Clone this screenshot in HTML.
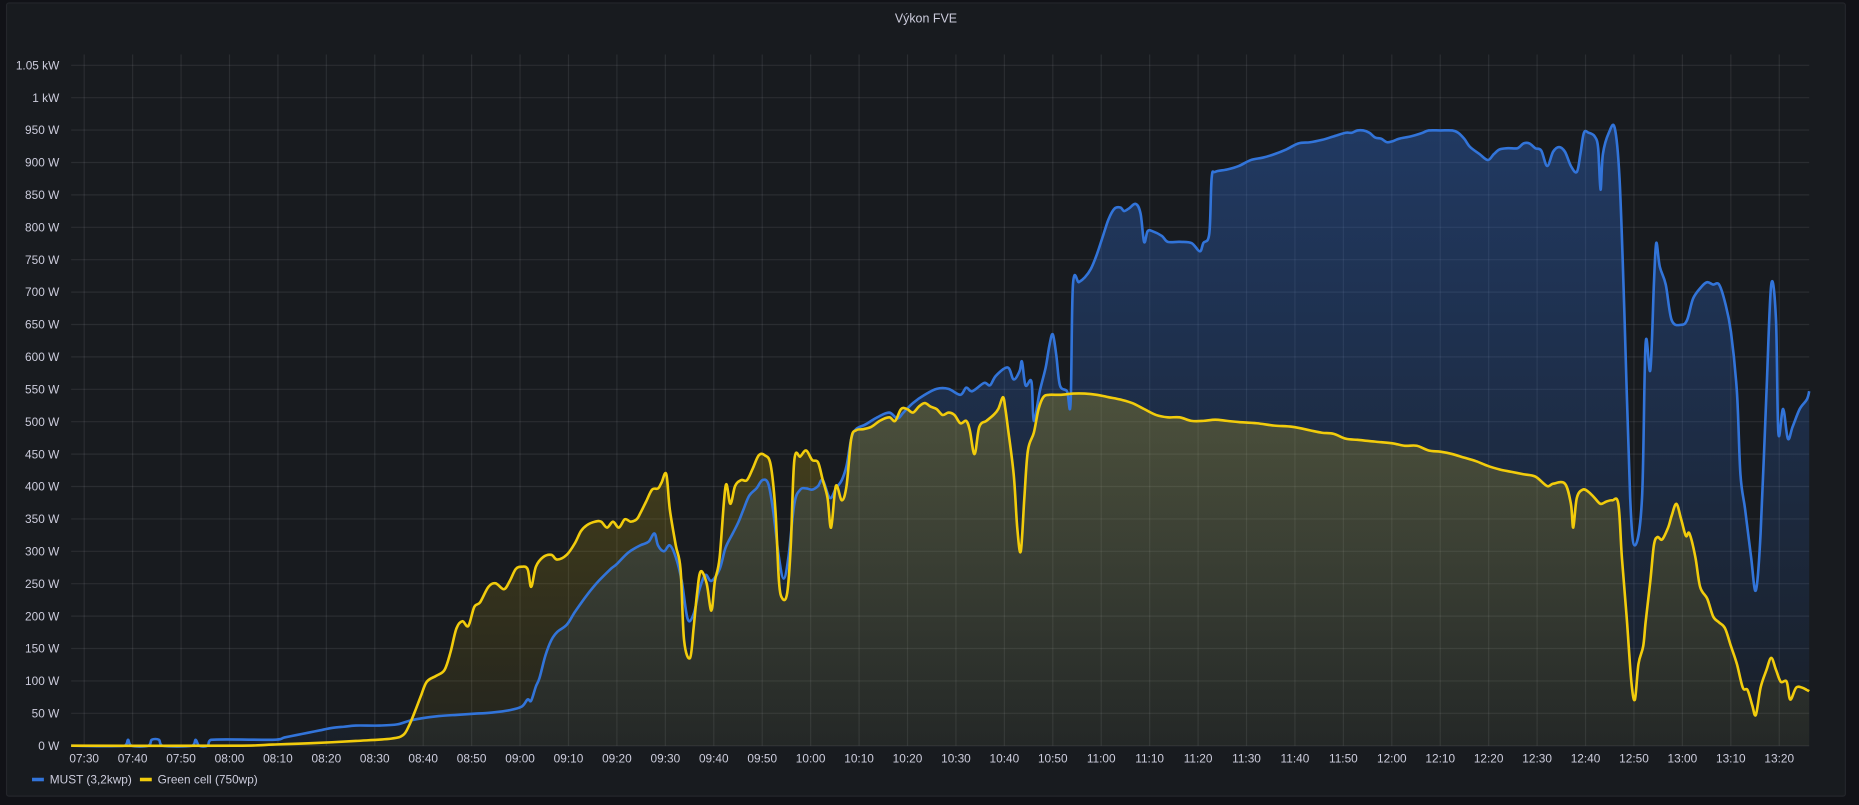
<!DOCTYPE html>
<html><head><meta charset="utf-8"><style>
html,body{margin:0;padding:0;background:#111217;width:1859px;height:805px;overflow:hidden}
svg{display:block}
text{font-family:"Liberation Sans",sans-serif;fill:#ccccdc}
</style></head><body>
<svg width="1859" height="805" viewBox="0 0 1568 679" xmlns="http://www.w3.org/2000/svg">
<defs>
<linearGradient id="gb" x1="0" y1="0" x2="0" y2="1"><stop offset="0" stop-color="#2f6bd0" stop-opacity="0.38"/><stop offset="1" stop-color="#2f6bd0" stop-opacity="0.05"/></linearGradient>
<linearGradient id="gy" x1="0" y1="0" x2="0" y2="1"><stop offset="0" stop-color="#f2cc0c" stop-opacity="0.22"/><stop offset="1" stop-color="#f2cc0c" stop-opacity="0.05"/></linearGradient>
</defs>
<rect x="5.5" y="2.5" width="1551" height="669" rx="2" fill="#181b1f" stroke="#24262b"/>
<text x="781" y="19" font-size="10.5" text-anchor="middle" fill="#d8d9da">Výkon FVE</text>
<g id="grid" stroke="#ccccdc" stroke-opacity="0.1" stroke-width="1"></g>
<g id="yl" font-size="10" text-anchor="end"></g>
<g id="xl" font-size="10" text-anchor="middle"></g>
<path id="bf" fill="url(#gb)"/>
<path id="yf" fill="url(#gy)"/>
<path id="bl" fill="none" stroke="#3274d9" stroke-width="2.2" stroke-linejoin="round"/>
<path id="yln" fill="none" stroke="#f2cc0c" stroke-width="2.2" stroke-linejoin="round"/>
<rect x="27" y="656" width="10" height="3" fill="#3274d9"/>
<text x="42" y="661" font-size="10">MUST (3,2kwp)</text>
<rect x="118" y="656" width="10" height="3" fill="#f2cc0c"/>
<text x="133" y="661" font-size="10">Green cell (750wp)</text>
</svg>
<script>
var NS="http://www.w3.org/2000/svg";
function el(p,t,a,tx){var e=document.createElementNS(NS,t);for(var k in a)e.setAttribute(k,a[k]);if(tx)e.textContent=tx;document.getElementById(p).appendChild(e);}
var yl=["0 W","50 W","100 W","150 W","200 W","250 W","300 W","350 W","400 W","450 W","500 W","550 W","600 W","650 W","700 W","750 W","800 W","850 W","900 W","950 W","1 kW","1.05 kW"];
for(var k=0;k<22;k++){var y=629-k*27.33;el("grid","line",{x1:60,x2:1526,y1:y,y2:y});el("yl","text",{x:50,y:y+3.5},yl[k]);}
for(var i=0;i<36;i++){var x=71+40.85*i;el("grid","line",{x1:x,x2:x,y1:46,y2:629});var m=450+i*10;var h=Math.floor(m/60),mm=m%60;el("xl","text",{x:x,y:643},(h<10?"0":"")+h+":"+(mm<10?"0":"")+mm);}
var B=[[60,629],[105,629],[108,624],[111,629],[125,629],[128,624],[134,624],[137,629],[162,629],[165,624],[168,629],[175,629],[178,624],[230,624],[240,622],[250,620],[260,618],[270,616],[280,614],[290,613],[300,612],[320,612],[335,611],[345,608],[355,606],[370,604],[385,603],[400,602],[415,601],[430,599],[440,596],[445,590],[448,591],[452,579],[455,572],[460,553],[465,540],[470,533],[478,527],[485,516],[495,502],[505,490],[515,480],[520,476],[530,466],[540,460],[547,457],[552,450],[555,460],[560,465],[565,460],[570,470],[575,490],[580,522],[585,518],[590,497],[595,485],[600,490],[607,480],[612,462],[618,450],[623,440],[627,430],[632,418],[638,412],[643,405],[648,408],[652,430],[657,470],[661,488],[665,470],[670,425],[675,413],[680,412],[685,413],[690,410],[694,405],[700,420],[705,412],[710,405],[714,393],[718,370],[722,362],[730,358],[740,352],[750,348],[757,353],[762,348],[770,340],[780,333],[790,328],[800,328],[810,333],[815,327],[820,330],[830,323],[835,325],[840,317],[850,310],[855,320],[860,313],[862,305],[865,325],[870,322],[872,355],[877,330],[882,310],[885,292],[888,282],[891,300],[894,325],[900,330],[903,340],[905,240],[910,238],[915,234],[920,227],[925,215],[930,200],[935,185],[940,176],[945,175],[948,178],[952,176],[958,172],[962,180],[965,204],[968,195],[972,195],[980,199],[985,204],[995,204],[1005,205],[1012,212],[1015,205],[1020,197],[1022,150],[1025,145],[1035,143],[1045,140],[1055,135],[1065,133],[1075,130],[1085,126],[1095,121],[1105,120],[1115,118],[1125,115],[1135,112],[1140,112],[1145,110],[1150,110],[1155,112],[1160,116],[1165,117],[1170,120],[1175,119],[1180,117],[1190,115],[1200,112],[1205,110],[1215,110],[1225,110],[1230,112],[1235,117],[1240,124],[1248,130],[1255,135],[1260,130],[1265,126],[1272,125],[1280,125],[1285,121],[1290,121],[1295,125],[1300,127],[1305,140],[1310,128],[1315,124],[1320,128],[1325,140],[1330,145],[1333,130],[1336,112],[1340,112],[1345,115],[1348,125],[1350,160],[1352,130],[1357,112],[1362,108],[1366,150],[1370,260],[1375,420],[1379,460],[1385,420],[1388,290],[1392,312],[1395,240],[1397,205],[1400,225],[1405,240],[1410,270],[1418,274],[1423,270],[1428,252],[1435,242],[1440,238],[1445,240],[1450,240],[1455,255],[1460,280],[1465,330],[1468,400],[1472,430],[1477,470],[1481,498],[1485,450],[1490,330],[1494,240],[1498,270],[1500,365],[1504,345],[1508,370],[1512,360],[1518,345],[1524,337],[1526,330]];
var Y=[[60,629],[200,629],[230,628],[260,627],[300,625],[330,623],[340,620],[345,612],[350,600],[355,587],[360,575],[368,570],[375,565],[380,550],[385,530],[390,524],[395,528],[400,512],[405,508],[412,495],[418,492],[425,497],[430,490],[435,480],[440,478],[445,480],[448,495],[452,478],[458,470],[465,468],[470,472],[478,468],[485,458],[490,448],[495,443],[502,440],[507,440],[512,445],[517,440],[522,445],[527,438],[532,440],[537,438],[540,433],[545,423],[550,413],[555,412],[558,407],[562,400],[565,430],[570,460],[574,480],[577,540],[582,555],[585,530],[588,500],[591,482],[596,492],[600,515],[603,490],[607,470],[612,410],[616,425],[620,410],[625,405],[630,405],[635,395],[640,384],[645,384],[650,392],[654,430],[657,490],[660,505],[664,500],[667,460],[670,388],[675,385],[680,380],[685,388],[690,390],[694,405],[698,420],[701,445],[705,410],[710,422],[714,410],[718,370],[722,363],[728,362],[735,360],[742,355],[750,352],[755,355],[760,345],[765,345],[770,348],[775,343],[780,340],[785,343],[790,345],[795,350],[800,348],[805,350],[810,357],[815,355],[818,363],[822,383],[826,360],[832,355],[838,350],[842,345],[846,335],[848,345],[850,360],[855,400],[858,445],[861,465],[864,420],[867,380],[872,365],[876,345],[880,335],[885,333],[895,333],[905,332],[915,332],[925,333],[935,335],[945,337],[955,340],[965,345],[975,350],[985,352],[995,352],[1005,355],[1015,355],[1025,354],[1035,355],[1045,356],[1060,357],[1075,359],[1090,360],[1105,363],[1115,365],[1125,366],[1135,370],[1145,371],[1155,372],[1165,373],[1175,374],[1185,376],[1195,376],[1205,380],[1215,381],[1225,383],[1235,386],[1245,389],[1255,393],[1265,396],[1275,398],[1285,400],[1295,402],[1305,410],[1310,408],[1320,408],[1325,425],[1327,445],[1330,420],[1335,413],[1340,415],[1345,420],[1350,425],[1355,423],[1360,422],[1365,425],[1368,470],[1372,520],[1376,575],[1379,590],[1382,560],[1386,545],[1388,525],[1392,490],[1395,460],[1398,453],[1402,455],[1407,445],[1410,435],[1414,425],[1418,438],[1422,452],[1425,450],[1430,470],[1434,495],[1440,505],[1445,520],[1450,525],[1455,530],[1460,545],[1465,560],[1470,580],[1474,582],[1478,595],[1481,603],[1485,580],[1490,565],[1494,555],[1498,565],[1502,575],[1507,575],[1510,590],[1515,580],[1520,580],[1524,582],[1526,583]];
function smooth(a){var d="M"+a[0][0]+","+a[0][1];for(var i=0;i<a.length-1;i++){var p0=a[i-1]||a[i],p1=a[i],p2=a[i+1],p3=a[i+2]||p2;var t=0.17;
var c1x=p1[0]+(p2[0]-p0[0])*t,c1y=p1[1]+(p2[1]-p0[1])*t,c2x=p2[0]-(p3[0]-p1[0])*t,c2y=p2[1]-(p3[1]-p1[1])*t;
c1x=Math.min(Math.max(c1x,p1[0]),p2[0]);c2x=Math.min(Math.max(c2x,p1[0]),p2[0]);
d+=" C"+c1x.toFixed(1)+","+c1y.toFixed(1)+" "+c2x.toFixed(1)+","+c2y.toFixed(1)+" "+p2[0]+","+p2[1];}return d;}
document.getElementById("bl").setAttribute("d",smooth(B));
document.getElementById("yln").setAttribute("d",smooth(Y));
document.getElementById("bf").setAttribute("d",smooth(B)+" L1526,629 L60,629 Z");
document.getElementById("yf").setAttribute("d",smooth(Y)+" L1526,629 L60,629 Z");
</script>
</body></html>
